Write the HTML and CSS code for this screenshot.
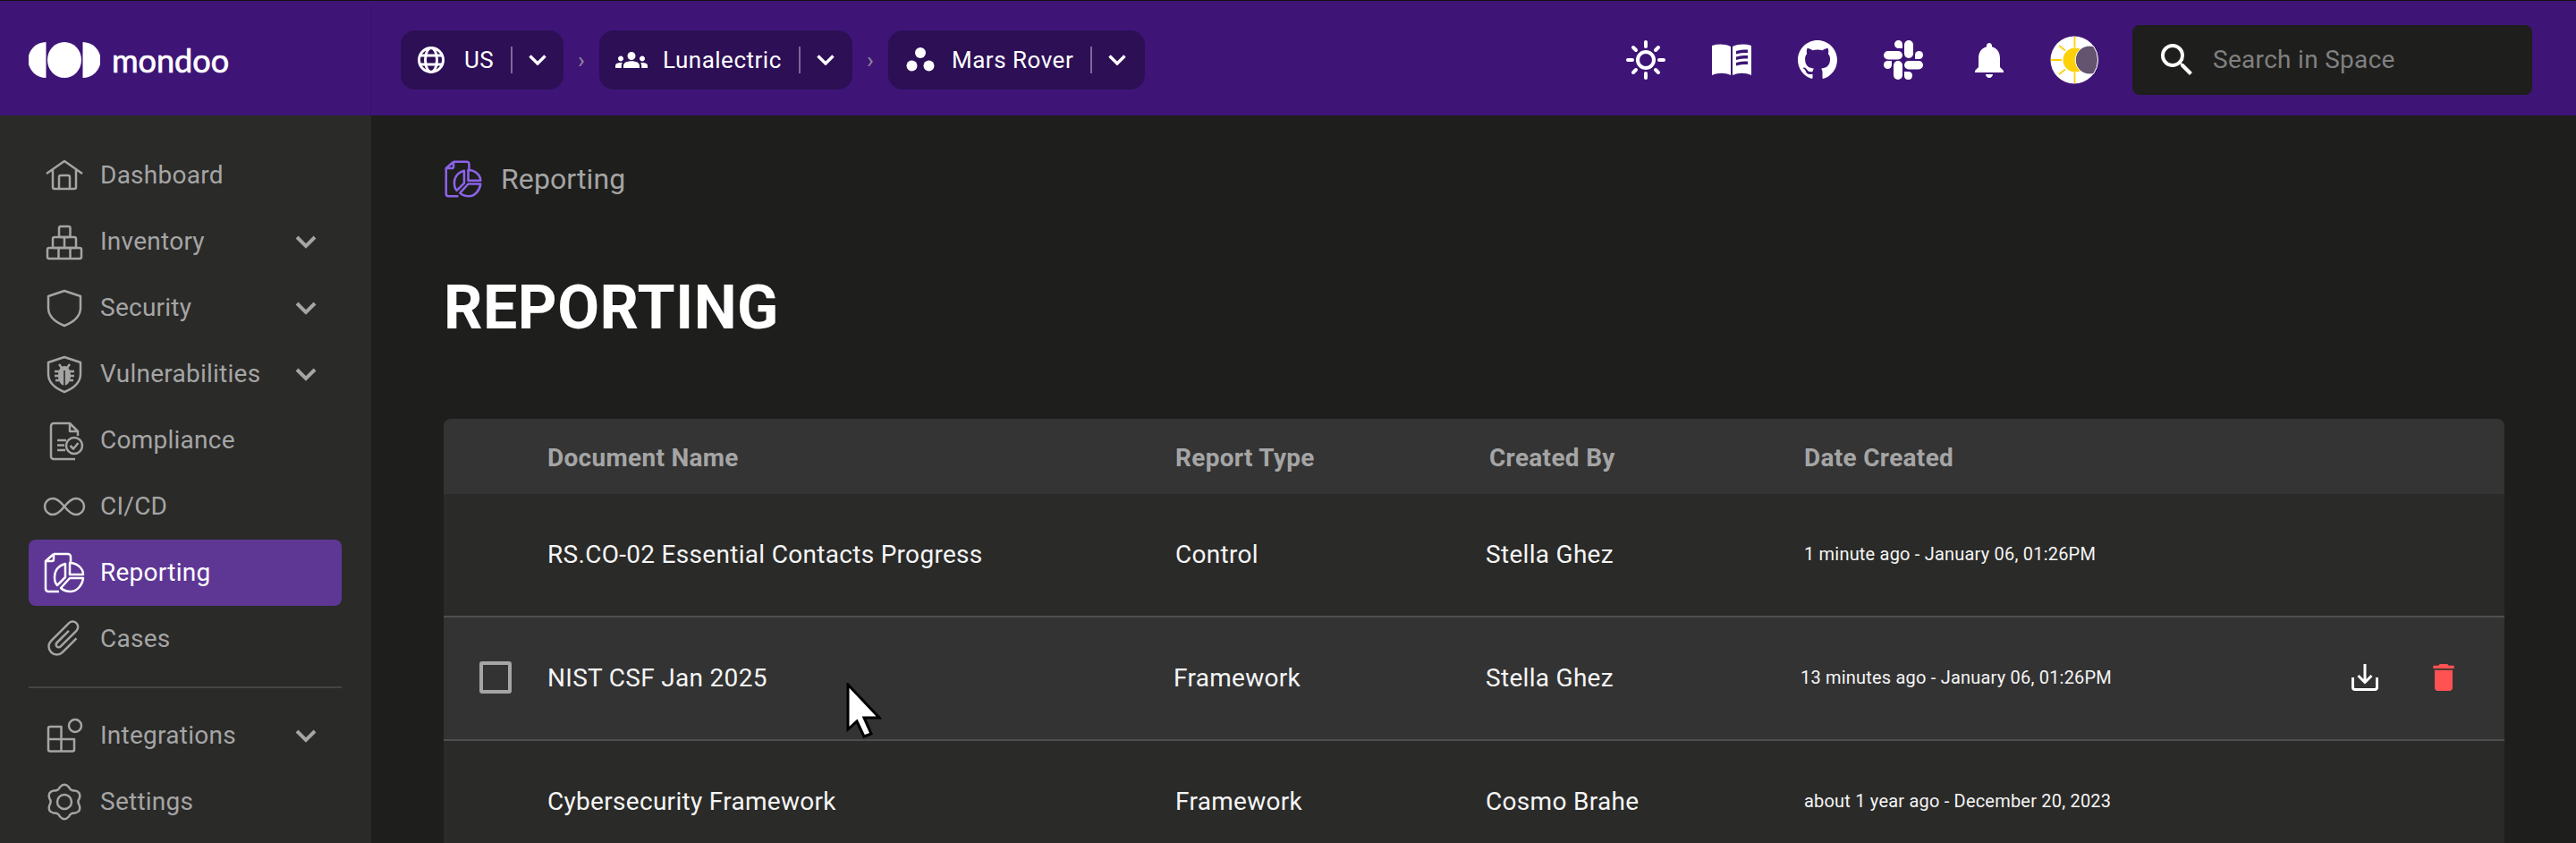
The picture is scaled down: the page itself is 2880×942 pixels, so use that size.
FILE: index.html
```html
<!DOCTYPE html>
<html lang="en">
<head>
    <meta charset="UTF-8">
    <meta name="viewport" content="width=device-width, initial-scale=1.0">
    <title>Reporting - Mondoo</title>
    <link rel="stylesheet" href="styles.css">
</head>
<body>
    <header class="topbar">
        <div class="brand">
            <svg class="brand-mark" viewBox="0 0 80 40" fill="#fff">
                <path d="M19.5 0A20 20 0 0 0 19.5 40Z"/>
                <ellipse cx="40" cy="20" rx="19" ry="20"/>
                <path d="M60.5 0A20 20 0 0 1 60.5 40Z"/>
            </svg>
            <span class="brand-name">mondoo</span>
        </div>
        <div class="crumbs">
            <div class="pill pill-region">
                <svg class="pill-icon" viewBox="0 0 36 36" fill="none" stroke="#fff" stroke-width="3">
                    <circle cx="18" cy="18" r="13.5"/>
                    <ellipse cx="18" cy="18" rx="6.5" ry="13.5"/>
                    <path d="M5.5 13H30.5M5.5 23H30.5"/>
                </svg>
                <span class="pill-label">US</span>
                <span class="pill-sep"></span>
                <svg class="pill-chevron" viewBox="0 0 20 12" fill="none" stroke="#fff" stroke-width="3.4"><path d="M1.5 1.5L10 10L18.5 1.5"/></svg>
            </div>
            <span class="crumb-arrow">›</span>
            <div class="pill pill-org">
                <svg class="pill-icon" viewBox="0 0 24 24" fill="#fff"><path d="M12 12.75c1.63 0 3.07.39 4.24.9 1.08.48 1.76 1.56 1.76 2.73V18H6v-1.61c0-1.18.68-2.26 1.76-2.73 1.17-.52 2.61-.91 4.24-.91zM4 13c1.1 0 2-.9 2-2s-.9-2-2-2-2 .9-2 2 .9 2 2 2zm1.13 1.1c-.37-.06-.74-.1-1.13-.1-.99 0-1.93.21-2.78.58C.48 14.9 0 15.62 0 16.43V18h4.5v-1.61c0-.83.23-1.61.63-2.29zM20 13c1.1 0 2-.9 2-2s-.9-2-2-2-2 .9-2 2 .9 2 2 2zm4 3.43c0-.81-.48-1.53-1.22-1.85-.85-.37-1.79-.58-2.78-.58-.39 0-.76.04-1.13.1.4.68.63 1.46.63 2.29V18H24v-1.57zM12 6c1.66 0 3 1.34 3 3s-1.34 3-3 3-3-1.34-3-3 1.34-3 3-3z"/></svg>
                <span class="pill-label">Lunalectric</span>
                <span class="pill-sep"></span>
                <svg class="pill-chevron" viewBox="0 0 20 12" fill="none" stroke="#fff" stroke-width="3.4"><path d="M1.5 1.5L10 10L18.5 1.5"/></svg>
            </div>
            <span class="crumb-arrow">›</span>
            <div class="pill pill-space">
                <svg class="pill-icon" viewBox="0 0 36 36" fill="#fff">
                    <circle cx="18" cy="10" r="6"/>
                    <circle cx="8.5" cy="24.5" r="6"/>
                    <circle cx="27.5" cy="24.5" r="6"/>
                </svg>
                <span class="pill-label">Mars Rover</span>
                <span class="pill-sep"></span>
                <svg class="pill-chevron" viewBox="0 0 20 12" fill="none" stroke="#fff" stroke-width="3.4"><path d="M1.5 1.5L10 10L18.5 1.5"/></svg>
            </div>
        </div>
        <div class="tools">
            <svg class="tool" viewBox="0 0 48 48" fill="none" stroke="#fff" stroke-width="4" stroke-linecap="round">
                <circle cx="24" cy="24" r="9"/>
                <path d="M24 4V9M24 39V44M4 24H9M39 24H44M10 10L13 13M35 35L38 38M10 38L13 35M35 13L38 10"/>
            </svg>
            <svg class="tool" viewBox="0 0 48 48" fill="#fff">
                <path d="M2 8C9 6 16 6 23 9V41C16 38 9 38 2 41Z"/>
                <path d="M25 9C32 6 39 6 46 8V41C39 38 32 38 25 41ZM29 14V17.500C33 16 37 16 42 16V12.500C37 12.500 33 12.500 29 14ZM29 20.500V24C33 22.500 37 22.500 42 22.500V19C37 19 33 19 29 20.500ZM29 27V30.500C33 29 37 29 42 29V25.500C37 25.500 33 25.500 29 27Z" fill-rule="evenodd"/>
            </svg>
            <svg class="tool" viewBox="-0.73 -0.73 17.46 17.46" fill="#fff"><path d="M8 0C3.58 0 0 3.58 0 8c0 3.54 2.29 6.53 5.47 7.59.4.07.55-.17.55-.38 0-.19-.01-.82-.01-1.49-2.01.37-2.53-.49-2.69-.94-.09-.23-.48-.94-.82-1.13-.28-.15-.68-.52-.01-.53.63-.01 1.08.58 1.23.82.72 1.21 1.87.87 2.33.66.07-.52.28-.87.51-1.07-1.78-.2-3.64-.89-3.64-3.95 0-.87.31-1.59.82-2.15-.08-.2-.36-1.02.08-2.12 0 0 .67-.21 2.2.82.64-.18 1.32-.27 2-.27.68 0 1.36.09 2 .27 1.53-1.04 2.2-.82 2.2-.82.44 1.1.16 1.92.08 2.12.51.56.82 1.27.82 2.15 0 3.07-1.87 3.75-3.65 3.95.29.25.54.73.54 1.48 0 1.07-.01 1.93-.01 2.2 0 .21.15.46.55.38A8.013 8.013 0 0016 8c0-4.42-3.58-8-8-8z"/></svg>
            <svg class="tool" viewBox="-2 -2 48 48" fill="#fff">
                <rect x="23" y="0" width="10" height="20" rx="5"/>
                <path d="M12 4.500A4.500 4.500 0 0 1 21 4.500V9H16.500A4.500 4.500 0 0 1 12 4.500Z"/>
                <rect x="0" y="12" width="21" height="9.500" rx="4.750"/>
                <path d="M35 16.500A4.500 4.500 0 1 1 39.500 21H35Z"/>
                <rect x="23" y="23" width="21" height="9.500" rx="4.750"/>
                <path d="M9 27.500A4.500 4.500 0 1 1 4.500 23H9Z"/>
                <rect x="11" y="23" width="10" height="21" rx="5"/>
                <path d="M23 35H28A4.500 4.500 0 1 1 23 39.500Z"/>
            </svg>
            <svg class="tool" viewBox="0 0 24 24" fill="#fff"><path d="M12 22c1.1 0 2-.9 2-2h-4c0 1.1.89 2 2 2zm6-6v-5c0-3.07-1.64-5.64-4.5-6.320V4c0-.83-.67-1.500-1.500-1.500s-1.500.67-1.500 1.500v.68C7.630 5.360 6 7.920 6 11v5l-2 2v1h16v-1l-2-2z"/></svg>
            <svg class="tool-theme" viewBox="0 0 54 54">
                <circle cx="27" cy="27" r="26.500" fill="#fff"/>
                <path d="M27.500 1V13M27.500 41V53M1 27H13M10 11L17 16.500M10 43L17 37.500" stroke="#fdd108" stroke-width="1.800" fill="none"/>
                <circle cx="28" cy="27" r="13.500" fill="#fdd108"/>
                <path d="M48.600 11.600A16 16 0 1 0 48.600 42.400A26.500 26.500 0 0 0 48.600 11.600Z" fill="#64546f" stroke="#fff" stroke-width="1"/>
            </svg>
        </div>
        <div class="search">
            <svg class="search-icon" viewBox="0 0 24 24" fill="#fff"><path d="M15.500 14h-.79l-.28-.27A6.471 6.471 0 0 0 16 9.500 6.500 6.500 0 1 0 9.500 16c1.610 0 3.090-.59 4.230-1.570l.27.28v.79l5 4.990L20.490 19l-4.990-5zm-6 0C7.010 14 5 11.990 5 9.500S7.010 5 9.500 5 14 7.010 14 9.500 11.990 14 9.500 14z"/></svg>
            <span class="search-text">Search in Space</span>
        </div>
    </header>

    <div class="layout">
        <nav class="sidebar">
            <a class="nav-item">
                <svg class="nav-icon" viewBox="0 0 48 48"><path d="M4 22L24 8L44 22M11 18V37a2 2 0 0 0 2 2H35a2 2 0 0 0 2-2V18M18 39V26a2 2 0 0 1 2-2h8a2 2 0 0 1 2 2V39"/></svg>
                <span class="nav-label">Dashboard</span>
            </a>
            <a class="nav-item">
                <svg class="nav-icon" viewBox="0 0 48 48"><rect x="18" y="7" width="12.500" height="12" rx="2"/><path d="M13 19H35a2 2 0 0 1 2 2V31H11V21a2 2 0 0 1 2-2ZM24 19V31"/><rect x="5" y="31" width="38" height="12" rx="2"/><path d="M17.500 31V43M30.500 31V43"/></svg>
                <span class="nav-label">Inventory</span>
                <svg class="nav-chevron" viewBox="0 0 24 15"><path d="M2 2L12 12L22 2"/></svg>
            </a>
            <a class="nav-item">
                <svg class="nav-icon" viewBox="0 0 48 48"><path d="M24 5L42 11V24C42 34 34 40 24 44C14 40 6 34 6 24V11Z"/></svg>
                <span class="nav-label">Security</span>
                <svg class="nav-chevron" viewBox="0 0 24 15"><path d="M2 2L12 12L22 2"/></svg>
            </a>
            <a class="nav-item">
                <svg class="nav-icon" viewBox="0 0 48 48"><path d="M24 5L42 11V24C42 34 34 40 24 44C14 40 6 34 6 24V11Z"/><path d="M18 13L21 17M30 13L27 17M13 21H18M13 26H18M14 31H18M35 21H30M35 26H30M34 31H30"/><path class="nav-fill" d="M24 15C28 15 31 19 31 26C31 32 28 36 24.800 36.500V20H23.200V36.500C20 36 17 32 17 26C17 19 20 15 24 15Z"/></svg>
                <span class="nav-label">Vulnerabilities</span>
                <svg class="nav-chevron" viewBox="0 0 24 15"><path d="M2 2L12 12L22 2"/></svg>
            </a>
            <a class="nav-item">
                <svg class="nav-icon" viewBox="0 0 48 48"><path d="M39 19V14L30 5H12a3 3 0 0 0-3 3V42a3 3 0 0 0 3 3H36M30 5V14H39M16 24H26M16 29.500H24M16 35H25"/><circle cx="35" cy="30" r="9"/><path d="M30.500 30L34 33.500L39.500 27"/></svg>
                <span class="nav-label">Compliance</span>
            </a>
            <a class="nav-item">
                <svg class="nav-icon" viewBox="0 0 48 48"><path d="M24 24c-4-5-8-9-13-9a9 9 0 0 0 0 18c5 0 9-4 13-9s8-9 13-9a9 9 0 0 1 0 18c-5 0-9-4-13-9z"/></svg>
                <span class="nav-label">CI/CD</span>
            </a>
            <a class="nav-item is-active">
                <svg class="nav-icon" viewBox="0 0 48 48"><path d="M12 3H28a3 3 0 0 1 3 3V13M12 3L3 11V42a3 3 0 0 0 3 3H18M3.500 11H10a2 2 0 0 0 2-2V3"/><path d="M25 14C17 16 13 22 13 29C13 33 14 36 16 38L25 29Z"/><path d="M30 13V26H45C45 19 38 13 30 13Z"/><path d="M20 41C23 44 27 45 31 45C38 45 44 38 45 30H30Z"/></svg>
                <span class="nav-label">Reporting</span>
            </a>
            <a class="nav-item">
                <svg class="nav-icon" viewBox="0 0 48 48"><path transform="rotate(45 24 24)" d="M33 14V36a9 9 0 0 1-18 0V8a6 6 0 0 1 12 0V33a3 3 0 0 1-6 0V14"/></svg>
                <span class="nav-label">Cases</span>
            </a>
            <div class="nav-rule"></div>
            <a class="nav-item">
                <svg class="nav-icon" viewBox="0 0 48 48"><circle cx="36" cy="13" r="7"/><path d="M8 14H20.500V41.500H8a2 2 0 0 1-2-2V16a2 2 0 0 1 2-2ZM6 28H35M20.500 28H35V39.500a2 2 0 0 1-2 2H20.500"/></svg>
                <span class="nav-label">Integrations</span>
                <svg class="nav-chevron" viewBox="0 0 24 15"><path d="M2 2L12 12L22 2"/></svg>
            </a>
            <a class="nav-item">
                <svg class="nav-icon" viewBox="0 0 48 48"><path d="M19 7.500Q24 2 29 7.500Q31 11.900 35.800 11.400Q43 13 40.800 20.100Q38 24 40.800 27.900Q43 35 35.800 36.600Q31 36.100 29 40.500Q24 46 19 40.500Q17 36.100 12.200 36.600Q5 35 7.200 27.900Q10 24 7.200 20.100Q5 13 12.200 11.400Q17 11.900 19 7.500Z"/><circle cx="24" cy="24" r="8"/></svg>
                <span class="nav-label">Settings</span>
            </a>
        </nav>

        <main class="content">
            <div class="page-crumb">
                <svg class="page-crumb-icon" viewBox="0 0 48 48"><path d="M12 3H28a3 3 0 0 1 3 3V13M12 3L3 11V42a3 3 0 0 0 3 3H18M3.500 11H10a2 2 0 0 0 2-2V3"/><path d="M25 14C17 16 13 22 13 29C13 33 14 36 16 38L25 29Z"/><path d="M30 13V26H45C45 19 38 13 30 13Z"/><path d="M20 41C23 44 27 45 31 45C38 45 44 38 45 30H30Z"/></svg>
                <span>Reporting</span>
            </div>
            <h1 class="page-title">REPORTING</h1>

            <div class="table">
                <div class="table-head">
                    <div></div>
                    <div>Document Name</div>
                    <div>Report Type</div>
                    <div>Created By</div>
                    <div>Date Created</div>
                    <div></div>
                </div>
                <div class="table-row">
                    <div></div>
                    <div>RS.CO-02 Essential Contacts Progress</div>
                    <div>Control</div>
                    <div class="cell-by">Stella Ghez</div>
                    <div class="cell-date">1 minute ago - January 06, 01:26PM</div>
                    <div></div>
                </div>
                <div class="table-row is-hover">
                    <div class="cell-check"><span class="checkbox"></span></div>
                    <div>NIST CSF Jan 2025</div>
                    <div class="cell-type">Framework</div>
                    <div class="cell-by">Stella Ghez</div>
                    <div class="cell-date">13 minutes ago - January 06, 01:26PM</div>
                    <div class="cell-actions">
                        <svg class="action" viewBox="0 0 40 40" fill="none" stroke="#fff" stroke-width="3"><path d="M20 5V26M12.500 18L20 25.500L27.500 18M6.500 20V31a2.500 2.500 0 0 0 2.500 2.500H31a2.500 2.500 0 0 0 2.500-2.500V20"/></svg>
                        <svg class="action" viewBox="0 0 24 24" fill="#ff5252"><path d="M6 19c0 1.100.9 2 2 2h8c1.100 0 2-.9 2-2V7H6v12zM19 4h-3.500l-1-1h-5l-1 1H5v2h14V4z"/></svg>
                    </div>
                </div>
                <div class="table-row">
                    <div></div>
                    <div>Cybersecurity Framework</div>
                    <div>Framework</div>
                    <div class="cell-by">Cosmo Brahe</div>
                    <div class="cell-date">about 1 year ago - December 20, 2023</div>
                    <div></div>
                </div>
            </div>
        </main>
    </div>

    <svg class="cursor" viewBox="0 0 40 62"><path d="M2 2V52L12 43L20 60L28 57L20 39H37Z" fill="#fff" stroke="#000" stroke-width="3"/></svg>
</body>
</html>
```

FILE: styles.css
```css
* {
    box-sizing: border-box;
}
html, body {
    height: 100%;
}
body {
    margin: 0;
    overflow: hidden;
    font-family: Roboto, sans-serif;
    background: #1e1e1c;
    color: #fff;
}

/* top bar */
.topbar {
    display: flex;
    align-items: center;
    height: 129px;
    padding-top: 3px;
    border-top: 1px solid #111;
    background: #3e1577;
}
.brand {
    display: flex;
    align-items: center;
    flex: none;
    width: 415px;
    height: 100%;
    padding-left: 32px;
    gap: 13px;
    border-right: 1px solid #371369;
}
.brand-mark {
    width: 80px;
    height: 40px;
}
.brand-name {
    font-family: Lato, sans-serif;
    font-weight: 400;
    font-size: 36px;
    line-height: 40px;
    -webkit-text-stroke: 0.7px #fff;
}
.crumbs {
    display: flex;
    align-items: center;
    margin-left: 33px;
}
.pill {
    display: flex;
    align-items: center;
    height: 66px;
    padding-left: 16px;
    border-radius: 16px;
    background: #2c0f55;
}
.pill-region { width: 182px; }
.pill-org { width: 283px; padding-left: 18px; }
.pill-space { width: 287px; padding-left: 18px; }
.pill-icon {
    flex: none;
    width: 36px;
    height: 36px;
    margin-right: 17px;
}
.pill-region .pill-icon {
    margin-right: 19px;
}
.pill-label {
    font-size: 26px;
    letter-spacing: 0.5px;
}
.pill-sep {
    width: 2px;
    height: 30px;
    margin-left: 19px;
    background: #7d6a96;
}
.pill-chevron {
    width: 20px;
    height: 12px;
    margin-left: 18px;
}
.crumb-arrow {
    width: 40px;
    text-align: center;
    font-size: 26px;
    color: #8f8a99;
}
.tools {
    display: flex;
    align-items: center;
    margin-left: auto;
    gap: 48px;
}
.tool {
    display: block;
    width: 48px;
    height: 48px;
}
.tool-theme {
    display: block;
    width: 54px;
    height: 54px;
    margin-left: -4px;
}
.search {
    display: flex;
    align-items: center;
    width: 447px;
    height: 78px;
    margin-left: 38px;
    margin-right: 49px;
    padding-left: 26px;
    border-radius: 8px;
    background: #1e1e1c;
}
.search-icon {
    width: 48px;
    height: 48px;
}
.search-text {
    margin-left: 16px;
    font-size: 28px;
    letter-spacing: 0.3px;
    color: #808080;
}

.layout {
    display: flex;
    height: calc(100% - 129px);
}

/* sidebar */
.sidebar {
    flex: none;
    width: 415px;
    padding: 30px 33px 0 32px;
    background: #2a2a28;
}
.nav-item {
    display: flex;
    align-items: center;
    height: 74px;
    padding-left: 16px;
    border-radius: 8px;
    color: #a5a5a5;
}
.nav-item.is-active {
    background: #5e3795;
    color: #fff;
}
.nav-icon {
    flex: none;
    width: 48px;
    height: 48px;
    fill: none;
    stroke: currentColor;
    stroke-width: 2.5;
    stroke-linejoin: round;
}
.nav-fill {
    fill: currentColor;
    stroke: none;
}
.nav-label {
    margin-left: 16px;
    margin-bottom: 2px;
    font-size: 28px;
    letter-spacing: 0.25px;
}
.nav-chevron {
    width: 24px;
    height: 15px;
    margin-left: auto;
    margin-right: 28px;
    fill: none;
    stroke: currentColor;
    stroke-width: 4;
}
.nav-rule {
    height: 2px;
    margin: 16px 0;
    background: #444;
}

/* main */
.content {
    flex: 1;
    padding: 49px 80px 0 81px;
}
.page-crumb {
    display: flex;
    align-items: center;
    height: 44px;
    gap: 20px;
    font-size: 32px;
    letter-spacing: 0.1px;
    color: #a5a5a5;
}
.page-crumb-icon {
    width: 44px;
    height: 44px;
    fill: none;
    stroke: #8b63e8;
    stroke-width: 2.8;
    stroke-linejoin: round;
}
.page-title {
    margin: 82px 0 84px;
    font-size: 68px;
    line-height: 80px;
    font-weight: 700;
    letter-spacing: 0.5px;
}

/* reports table */
.table {
    border-radius: 8px 8px 0 0;
    overflow: hidden;
}
.table-head, .table-row {
    display: grid;
    grid-template-columns: 116px 702px 351px 352px 1fr 300px;
    align-items: center;
}
.table-head {
    height: 84px;
    padding-top: 2px;
    background: #343434;
    font-size: 28px;
    font-weight: 700;
    letter-spacing: 0.3px;
    color: #a5a5a5;
}
.table-row {
    height: 138px;
    padding-bottom: 2px;
    border-bottom: 2px solid #4e4e4e;
    background: #2a2a28;
    font-size: 28px;
    letter-spacing: 0.3px;
    color: #f5f5f5;
}
.table-row.is-hover {
    background: #333;
}
.cell-by {
    margin-left: -4px;
}
.cell-date {
    font-size: 20px;
    letter-spacing: 0.2px;
}
.is-hover .cell-type {
    margin-left: -2px;
}
.is-hover .cell-date {
    margin-left: -4px;
}
.cell-check {
    padding-left: 40px;
}
.checkbox {
    display: block;
    width: 36px;
    height: 36px;
    border: 4px solid #a5a5a5;
    border-radius: 3px;
}
.cell-actions {
    display: flex;
    justify-content: flex-end;
    gap: 48px;
    padding-right: 48px;
}
.action {
    width: 40px;
    height: 40px;
}

.cursor {
    position: absolute;
    left: 946px;
    top: 763px;
    width: 40px;
    height: 62px;
}
```
